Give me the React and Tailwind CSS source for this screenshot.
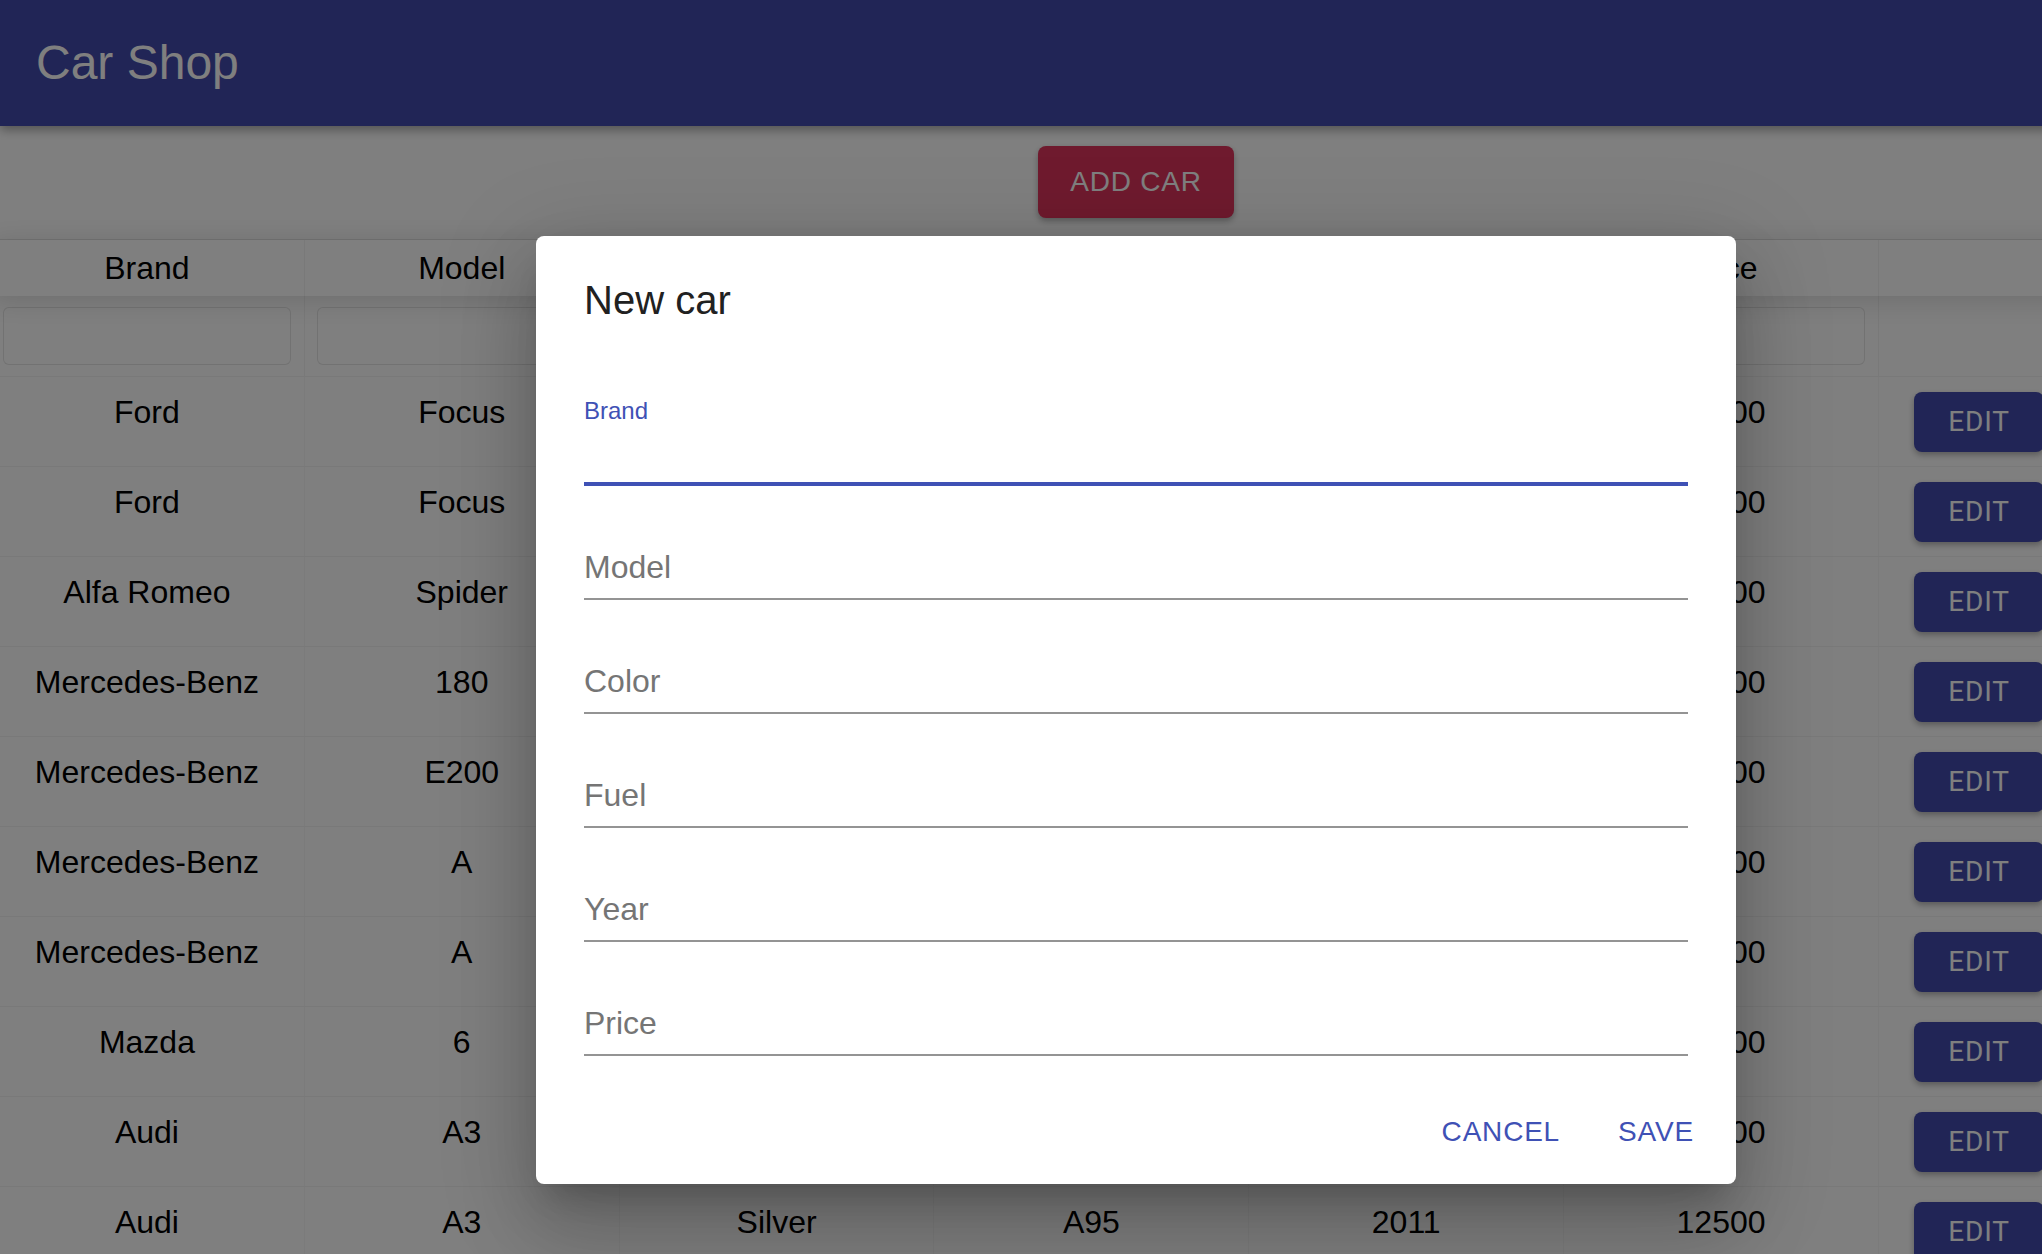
import React from "react";

const cars = [
  ["Ford", "Focus", "Black", "A95", "2014", "14500"],
  ["Ford", "Focus", "White", "Diesel", "2016", "17900"],
  ["Alfa Romeo", "Spider", "Red", "A98", "2008", "23000"],
  ["Mercedes-Benz", "180", "Silver", "A95", "2012", "19800"],
  ["Mercedes-Benz", "E200", "Black", "Diesel", "2015", "32500"],
  ["Mercedes-Benz", "A", "Blue", "A95", "2013", "16400"],
  ["Mercedes-Benz", "A", "White", "A95", "2017", "24900"],
  ["Mazda", "6", "Grey", "Diesel", "2014", "13700"],
  ["Audi", "A3", "Black", "A95", "2015", "18200"],
  ["Audi", "A3", "Silver", "A95", "2011", "12500"],
];

const headers = ["Brand", "Model", "Color", "Fuel", "Year", "Price"];

function TextField({ label, focused }) {
  if (focused) {
    return (
      <div className="h-[114px] border-b-4 border-[#3f51b5] pt-[27px]">
        <label className="block text-[24px] leading-[24px] text-[#3f51b5]">{label}</label>
      </div>
    );
  }
  return (
    <div className="h-[114px] border-b-2 border-[#949494] flex flex-col justify-end pb-[15px]">
      <span className="text-[32px] leading-[32px] text-[#757575]">{label}</span>
    </div>
  );
}

export default function App() {
  return (
    <div className="relative w-[2042px] h-[1254px] overflow-hidden bg-white font-['Liberation_Sans',Arial,sans-serif]">
      <div className="w-[2272px]">
        {/* App bar */}
        <header className="relative z-10 h-[126px] bg-[#424aac] flex items-center px-[36px] shadow-[0_4px_10px_rgba(0,0,0,0.35)]">
          <h1 className="text-[48px] text-white font-normal">Car Shop</h1>
        </header>

        <div className="flex justify-center pt-[20px]">
          <button className="h-[72px] px-[32px] rounded-[8px] bg-[#de345c] text-white text-[28px] tracking-[0.8px] uppercase shadow-[0_3px_6px_rgba(0,0,0,0.3)]">
            Add car
          </button>
        </div>

        {/* Table */}
        <div className="mt-[21px] -ml-[10px] border-t border-black/10">
          <div className="relative z-10 flex h-[56px] shadow-[0_4px_30px_rgba(0,0,0,0.15)] bg-white">
            {headers.map((h) => (
              <div key={h} className="w-[314.83px] shrink-0 flex items-center justify-center border-r border-black/5 text-[32px] text-black">
                {h}
              </div>
            ))}
            <div className="w-[403px] shrink-0" />
          </div>

          <div className="flex h-[81px] border-b border-black/5">
            {headers.map((h) => (
              <div key={h} className="w-[314.83px] shrink-0 px-[12.5px] pt-[11px] border-r border-black/5">
                <input className="w-full h-[58px] border border-black/10 rounded-[6px] bg-white" />
              </div>
            ))}
            <div className="w-[403px] shrink-0" />
          </div>

          {cars.map((car, i) => (
            <div key={i} className="flex h-[90px] border-b border-black/5">
              {car.map((v, j) => (
                <div key={j} className="w-[314.83px] shrink-0 pt-[17px] text-center text-[32px] leading-[36px] text-black border-r border-black/[0.03]">
                  {v}
                </div>
              ))}
              <div className="w-[403px] shrink-0 pl-[35px] pt-[15px]">
                <button className="w-[130px] h-[60px] rounded-[8px] bg-[#424aac] text-white text-[28px] tracking-[0.8px] font-['Roboto',sans-serif] shadow-[0_3px_6px_rgba(0,0,0,0.3)]">
                  EDIT
                </button>
              </div>
            </div>
          ))}
        </div>
      </div>

      {/* Backdrop */}
      <div className="absolute inset-0 z-20 bg-black/50" />

      {/* Dialog */}
      <div className="absolute top-0 left-0 z-30 w-[2272px] h-[1420px] flex items-center justify-center">
        <div className="w-[1200px] bg-white rounded-[8px] shadow-[0_22px_30px_-14px_rgba(0,0,0,0.2),0_48px_76px_6px_rgba(0,0,0,0.14),0_18px_92px_16px_rgba(0,0,0,0.12)]">
          <h2 className="px-[48px] pt-[32px] text-[40px] leading-[64px] text-[#212121] font-normal">New car</h2>
          <div className="px-[48px] pt-[40px]">
            <TextField label="Brand" focused />
            <TextField label="Model" />
            <TextField label="Color" />
            <TextField label="Fuel" />
            <TextField label="Year" />
            <TextField label="Price" />
          </div>
          <div className="mt-[24px] p-[16px] flex justify-end gap-[16px]">
            <button className="h-[72px] min-w-[128px] px-[16px] text-[28px] tracking-[0.8px] text-[#3f51b5] uppercase">Cancel</button>
            <button className="h-[72px] min-w-[128px] px-[16px] text-[28px] tracking-[0.8px] text-[#3f51b5] uppercase">Save</button>
          </div>
        </div>
      </div>
    </div>
  );
}
